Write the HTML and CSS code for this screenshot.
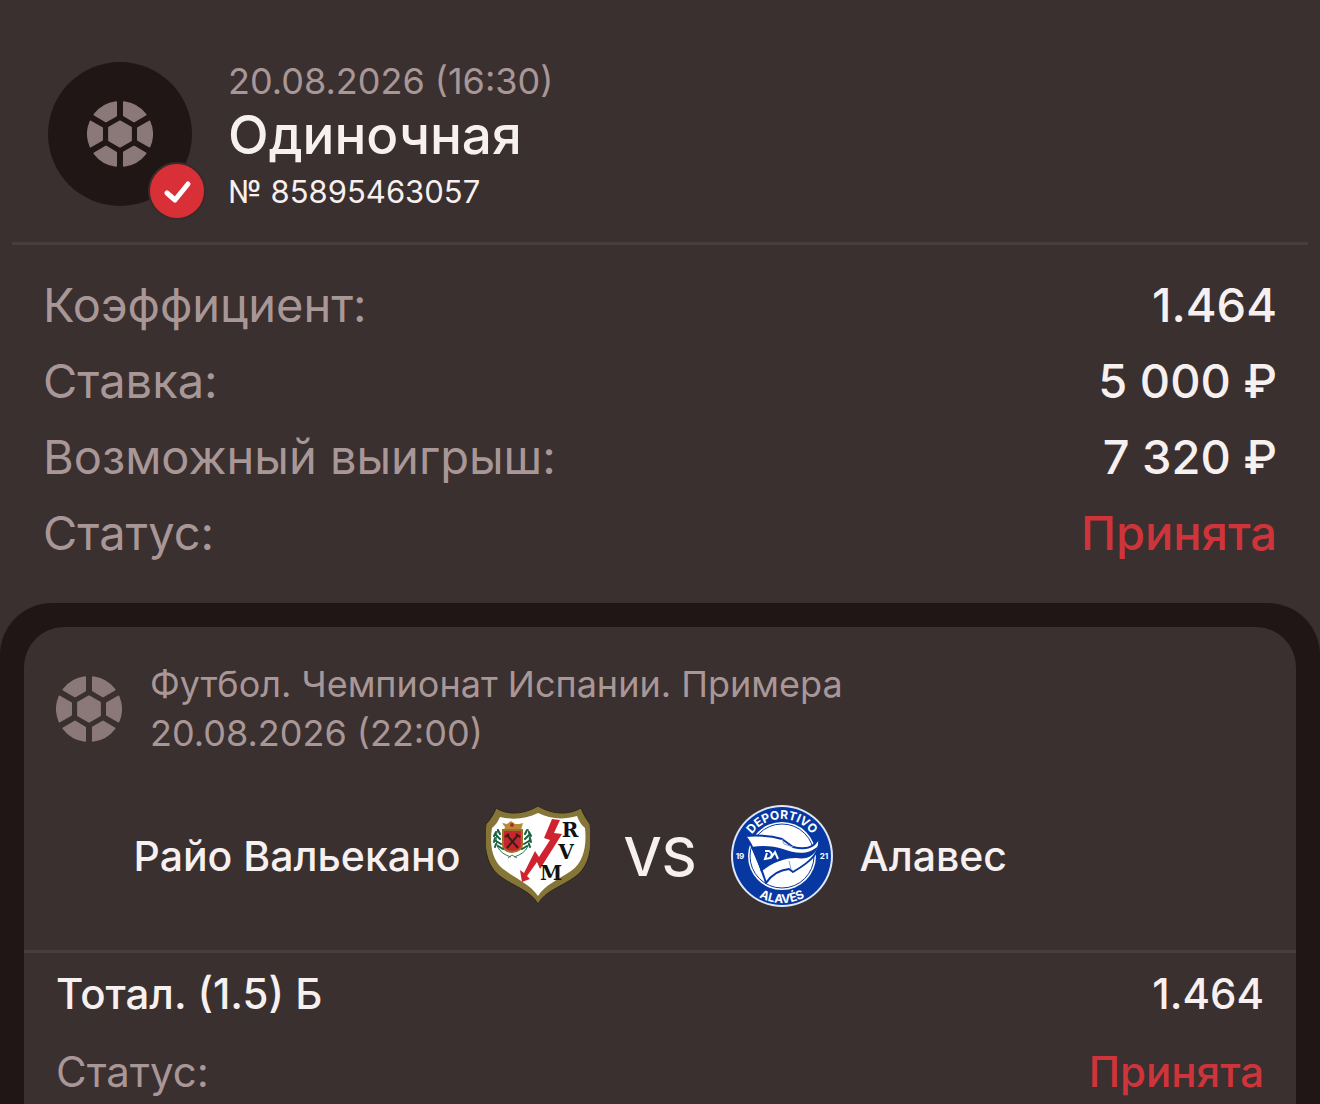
FILE: index.html
```
<!DOCTYPE html>
<html lang="ru">
<head>
    <meta charset="UTF-8">
    <meta name="viewport" content="width=device-width, initial-scale=1.0">
    <title>Одиночная № 85895463057</title>
    <link rel="stylesheet" href="styles.css">
</head>
<body>
    <svg class="sprite" aria-hidden="true">
        <symbol id="ball" viewBox="-33 -33 66 66">
            <g fill="currentColor" stroke="currentColor" stroke-width="2" stroke-linejoin="round">
                <path d="M0-12.6 10.9-6.3V6.3L0 12.6-10.9 6.3V-6.3Z"/>
                <path id="panel" d="M4-31.7A32 32 0 0 1 25.5-19.3L14-12.7 4-18.5Z"/>
                <use href="#panel" transform="rotate(60)"/>
                <use href="#panel" transform="rotate(120)"/>
                <use href="#panel" transform="rotate(180)"/>
                <use href="#panel" transform="rotate(240)"/>
                <use href="#panel" transform="rotate(300)"/>
            </g>
        </symbol>
    </svg>

    <header class="bet-header">
        <div class="avatar">
            <svg class="ball"><use href="#ball"/></svg>
            <div class="badge">
                <svg viewBox="0 0 54 54"><path d="M17 29 25 36 38 20" fill="none" stroke="#fff" stroke-width="5" stroke-linecap="round" stroke-linejoin="round"/></svg>
            </div>
        </div>
        <div class="bet-info">
            <div class="bet-date">20.08.2026 (16:30)</div>
            <h1 class="bet-title">Одиночная</h1>
            <div class="bet-number">№ 85895463057</div>
        </div>
    </header>

    <dl class="summary">
        <div class="row"><dt>Коэффициент:</dt><dd>1.464</dd></div>
        <div class="row"><dt>Ставка:</dt><dd>5 000 ₽</dd></div>
        <div class="row"><dt>Возможный выигрыш:</dt><dd>7 320 ₽</dd></div>
        <div class="row"><dt>Статус:</dt><dd class="accepted">Принята</dd></div>
    </dl>

    <main class="events">
        <section class="card">
            <div class="league">
                <svg class="ball"><use href="#ball"/></svg>
                <div class="league-text">
                    <div>Футбол. Чемпионат Испании. Примера</div>
                    <div>20.08.2026 (22:00)</div>
                </div>
            </div>

            <div class="match">
                <div class="team home">
                    <span>Райо Вальекано</span>
                    <svg class="crest" viewBox="3 3 104 104" role="img" aria-label="Rayo Vallecano">
                        <path d="M13 7C24 14 40 14 55 5 70 14 86 14 98 7 100 13 104 19 107 23 110 48 106 66 92 76 78 86 62 90 55 103 48 90 32 86 18 76 4 66 0 48 3 23 7 19 11 13 13 7Z" fill="#857536" stroke="#2d261b"/>
                        <path d="M17 16C30 19 43 18 55 12 67 18 80 19 94 15 96 20 98 24 102 27 104 46 100 62 88 70 76 78 62 84 55 95 48 84 34 78 23 70 10 62 6 46 9 27 13 24 15 20 17 16Z" fill="#fff"/>
                        <!-- coat of arms -->
                        <g transform="translate(3 3)">
                            <path d="M19 23 16 19 21 20 25 17 29 20 33 20 37 19 35 26H18Z" fill="#b88a35"/>
                            <circle cx="26" cy="21" r="2" fill="#b92831"/>
                            <path d="M17 26H36V41Q36 47 26 48 17 47 17 41Z" fill="#c9252e" stroke="#9c702b" stroke-width="2"/>
                            <path d="M21 31 32 44M32 31 21 44M19 33 23 30M30 30 34 33" fill="none" stroke="#351d1b" stroke-width="2"/>
                            <path d="M12 25Q5 47 25 53M42 25Q48 47 28 53" fill="none" stroke="#2b7653"/>
                            <path d="M12 26 14 30M10 31 14 35M10 37 15 40M12 42 17 45M10 28 8 32M9 34 8 38M10 40 9 43M41 26 39 30M43 31 39 35M43 37 38 40M41 42 36 45M43 28 45 32M44 34 45 38M43 40 44 43" stroke="#176341" stroke-width="2" stroke-linecap="round"/>
                            <path d="M22 54 26 51 31 54" fill="none" stroke="#557464"/>
                        </g>
                        <!-- lightning -->
                        <path d="M69 18 77 19 71 32 79 33 57 68 54 61 44 75 47 78 39 81 37 69 41 72 52 50 56 56 67 39 61 37Z" fill="#cf2430"/>
                        <g class="crest-letters">
                            <text x="87" y="36">R</text>
                            <text x="83" y="58">V</text>
                            <text x="68" y="79">M</text>
                        </g>
                    </svg>
                </div>
                <div class="versus">VS</div>
                <div class="team away">
                    <svg class="crest" viewBox="3 3 104 104" role="img" aria-label="Deportivo Alavés">
                        <defs>
                            <path id="arc-top" d="M18 55A37 37 0 0 1 92 55"/>
                            <path id="arc-bottom" d="M8 55A47 47 0 0 0 102 55"/>
                        </defs>
                        <circle cx="55" cy="55" r="51" fill="#dfe8fa"/>
                        <circle cx="55" cy="55" r="49" fill="#0738a2"/>
                        <circle cx="55" cy="55" r="34" fill="#fff"/>
                        <circle cx="55" cy="55" r="32" fill="none" stroke="#0738a2"/>
                        <!-- flag -->
                        <path d="M18 35C31 34 45 35 55 38L66 46C78 49 88 47 92 36 94 51 85 60 66 71L62 68C52 69 45 73 39 82Q34 66 28 53 24 42 18 35Z" fill="#fff" stroke="#0738a2" stroke-width="2" stroke-linejoin="round"/>
                        <path d="M24 46C36 44 47 45 56 48 69 53 82 54 91 45 88 55 80 59 69 57 57 57 44 62 34 71Q31 60 24 46Z" fill="#0738a2"/>
                        <path d="M55 38 57 43 66 46M62 60 64 68" fill="none" stroke="#8aa2d6"/>
                        <path d="M38 50H42Q47 53 43 57L38 58 40 52M44 57 48 51 51 58" fill="none" stroke="#fff" stroke-width="2"/>
                        <g class="crest-name">
                            <text><textPath href="#arc-top" startOffset="50%">DEPORTIVO</textPath></text>
                            <text><textPath href="#arc-bottom" startOffset="50%">ALAVÉS</textPath></text>
                        </g>
                        <g class="crest-year">
                            <text x="13" y="58">19</text>
                            <text x="97" y="58">21</text>
                        </g>
                    </svg>
                    <span>Алавес</span>
                </div>
            </div>

            <dl class="outcome">
                <div class="row"><dt class="pick">Тотал. (1.5) Б</dt><dd>1.464</dd></div>
                <div class="row"><dt>Статус:</dt><dd class="accepted">Принята</dd></div>
            </dl>
        </section>
    </main>
</body>
</html>
```
FILE: styles.css
```
* {
    box-sizing: border-box;
}
body {
    margin: 0;
    min-height: 100vh;
    display: flex;
    flex-direction: column;
    background-color: #3a302f;
    color: #f7f0f0;
    font-family: Inter, 'Noto Sans', sans-serif;
}
h1, dl, dd {
    margin: 0;
}
.sprite {
    position: absolute;
    width: 0;
    height: 0;
}
.ball {
    display: block;
    flex: none;
    width: 66px;
    height: 66px;
    color: #8b7878;
}

/* header */
.bet-header {
    display: flex;
    gap: 36px;
    margin: 0 12px;
    padding: 62px 36px 28px;
    border-bottom: 3px solid #493c3c;
}
.avatar {
    position: relative;
    display: flex;
    flex: none;
    align-items: center;
    justify-content: center;
    width: 144px;
    height: 144px;
    border-radius: 50%;
    background-color: #201615;
}
.badge {
    position: absolute;
    right: -14px;
    bottom: -14px;
    width: 58px;
    height: 58px;
    border: 2px solid #3a2a2a;
    border-radius: 50%;
    background-color: #d93038;
}
.badge svg {
    display: block;
}
.bet-date {
    font-size: 36px;
    line-height: 38px;
    color: #a99797;
}
.bet-title {
    font-size: 53px;
    font-weight: 500;
    line-height: 70px;
}
.bet-number {
    font-size: 31px;
    line-height: 44px;
}

/* label and value rows */
.row {
    display: flex;
    justify-content: space-between;
}
.row dt {
    color: #a99797;
}
.row dd {
    font-weight: 500;
}
.row .pick {
    color: #f7f0f0;
    font-weight: 500;
}
.row .accepted {
    color: #d0343b;
}
.summary {
    padding: 22px 43px 32px;
    font-size: 47px;
    line-height: 76px;
}

/* events */
.events {
    flex: 1;
    display: flex;
    padding: 24px 24px 0;
    border-radius: 52px 52px 0 0;
    background-color: #201615;
}
.card {
    flex: 1;
    border-radius: 40px 40px 0 0;
    background-color: #3a302f;
}
.league {
    display: flex;
    align-items: center;
    gap: 28px;
    padding: 33px 32px 0;
    font-size: 36px;
    line-height: 49px;
    color: #a99797;
}
.match {
    display: grid;
    grid-template-columns: 1fr auto 1fr;
    align-items: center;
    gap: 33px;
    padding: 46px 32px 42px;
    border-bottom: 3px solid #493c3c;
}
.team {
    display: flex;
    align-items: center;
    gap: 26px;
    font-size: 41px;
    font-weight: 500;
}
.home {
    justify-content: flex-end;
}
.versus {
    font-size: 54px;
    font-weight: 500;
}
.crest {
    flex: none;
    width: 104px;
    height: 104px;
}
.crest-letters {
    font: bold 20px 'DejaVu Serif', serif;
    text-anchor: middle;
    fill: #111;
}
.crest-name {
    font: bold 12px Inter, sans-serif;
    text-anchor: middle;
    fill: #fff;
}
.crest-year {
    font: bold 8px Inter, sans-serif;
    text-anchor: middle;
    fill: #fff;
}
.outcome {
    display: grid;
    gap: 14px;
    padding: 9px 32px 0;
    font-size: 42px;
    line-height: 64px;
}
```
